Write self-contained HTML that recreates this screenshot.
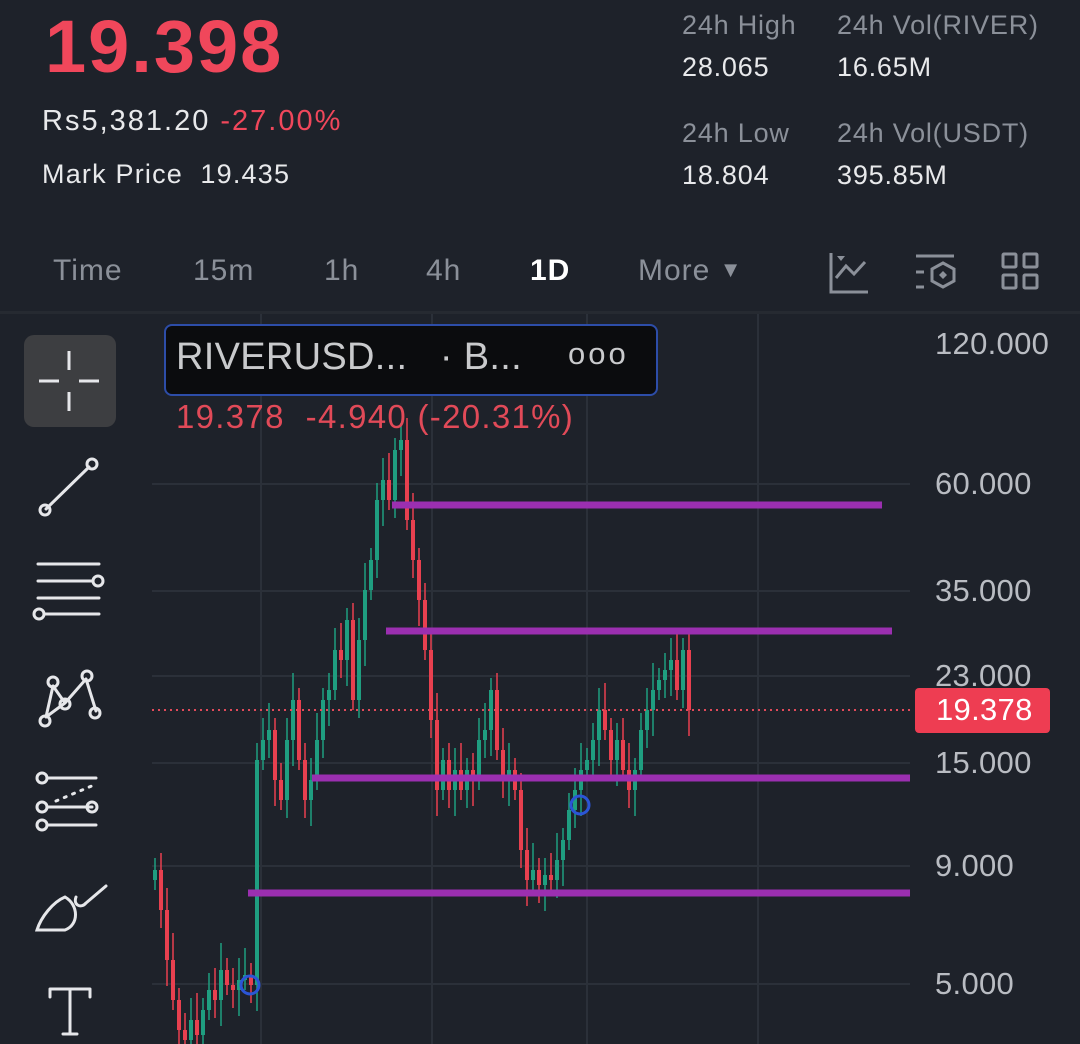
<!DOCTYPE html>
<html><head><meta charset="utf-8"><style>
body{margin:0;width:1080px;height:1044px;background:#1e222a;font-family:"Liberation Sans",sans-serif;overflow:hidden;position:relative;color:#e8e9eb}
.a{position:absolute;white-space:nowrap}
.g{color:#8b9099}
.tab{position:absolute;top:254px;font-size:30px;color:#8b9099;letter-spacing:1px}
.r{font-size:27px;letter-spacing:0.8px}
.y{font-size:31px;color:#b9bcc2;letter-spacing:0.3px}
</style></head><body>
<div class="a" style="left:45px;top:4px;font-size:74px;font-weight:bold;color:#f0475b;letter-spacing:2px">19.398</div>
<div class="a" style="left:42px;top:105px;font-size:29px;letter-spacing:2px">Rs5,381.20 <span style="color:#f0475b">-27.00%</span></div>
<div class="a" style="left:42px;top:159px;font-size:27px;letter-spacing:1.2px">Mark Price&nbsp; 19.435</div>
<div class="a g r" style="left:682px;top:10px">24h High</div>
<div class="a r" style="left:682px;top:52px">28.065</div>
<div class="a g r" style="left:837px;top:10px">24h Vol(RIVER)</div>
<div class="a r" style="left:837px;top:52px">16.65M</div>
<div class="a g r" style="left:682px;top:118px">24h Low</div>
<div class="a r" style="left:682px;top:160px">18.804</div>
<div class="a g r" style="left:837px;top:118px">24h Vol(USDT)</div>
<div class="a r" style="left:837px;top:160px">395.85M</div>

<div class="tab" style="left:53px">Time</div>
<div class="tab" style="left:193px">15m</div>
<div class="tab" style="left:324px">1h</div>
<div class="tab" style="left:426px">4h</div>
<div class="tab" style="left:530px;color:#fff;font-weight:bold">1D</div>
<div class="tab" style="left:638px">More <span style="font-size:22px;position:relative;top:-3px">▼</span></div>
<svg class="a" style="left:820px;top:245px" width="240" height="55" fill="none" stroke="#8b9099" stroke-width="3">
<path d="M11 8V47H48M16 33l10-12 8 8 11-12"/><path d="M17 11h8l-4 5z" fill="#8b9099" stroke="none"/>
<path d="M96 11h38M96 27h8M96 42h8"/><path d="M123 18l11 6v12l-11 6-11-6V24z"/><path d="M123 26l4 4-4 4-4-4z" fill="#8b9099" stroke="none"/>
<rect x="183" y="9" width="13" height="13" rx="1"/><rect x="204" y="9" width="13" height="13" rx="1"/><rect x="183" y="30" width="13" height="13" rx="1"/><rect x="204" y="30" width="13" height="13" rx="1"/>
</svg>
<div class="a" style="left:0;top:311px;width:1080px;height:3px;background:#262a31"></div>

<svg class="a" style="left:0;top:0" width="1080" height="1044" id="ch">
<g stroke="#2b3039" stroke-width="2">
<line x1="261" y1="314" x2="261" y2="1044"/><line x1="432" y1="314" x2="432" y2="1044"/><line x1="587" y1="314" x2="587" y2="1044"/><line x1="758" y1="314" x2="758" y2="1044"/>
<line x1="152" y1="484" x2="910" y2="484"/><line x1="152" y1="591" x2="910" y2="591"/><line x1="152" y1="676" x2="910" y2="676"/><line x1="152" y1="763" x2="910" y2="763"/><line x1="152" y1="866" x2="910" y2="866"/><line x1="152" y1="984" x2="910" y2="984"/>
</g>
<g id="cd"></g>
<line x1="152" y1="710" x2="912" y2="710" stroke="#e24a5a" stroke-width="2" stroke-dasharray="2 4"/>
<g stroke="#9b2fb0" stroke-width="7">
<line x1="392" y1="505" x2="882" y2="505"/><line x1="386" y1="631" x2="892" y2="631"/><line x1="312" y1="778" x2="910" y2="778"/><line x1="248" y1="893" x2="910" y2="893"/>
</g>
<circle cx="250" cy="985" r="9" fill="none" stroke="#2b55d6" stroke-width="3"/>
<circle cx="580" cy="805" r="9" fill="none" stroke="#2b55d6" stroke-width="3"/>
<g stroke="#e6e7ea" stroke-width="3" fill="none" stroke-linecap="round">
<path d="M46 509L89 467"/><circle cx="45" cy="510" r="5"/><circle cx="92" cy="464" r="5"/>
<path d="M38 564h61M38 581h55M38 598h61M45 614h54"/><circle cx="98" cy="581" r="5"/><circle cx="39" cy="614" r="5"/>
<path d="M53 686L46 717M53 686l12 17M86 679l-21 24M86 679l10 32M65 703l-19 14"/><circle cx="53" cy="682" r="5"/><circle cx="87" cy="676" r="5"/><circle cx="65" cy="704" r="5"/><circle cx="45" cy="721" r="5"/><circle cx="95" cy="713" r="5"/>
<path d="M48 778h48M48 807h44M48 825h48"/><path d="M56 801l38-16" stroke-dasharray="2 7"/><circle cx="42" cy="778" r="5"/><circle cx="42" cy="807" r="5"/><circle cx="92" cy="807" r="5"/><circle cx="42" cy="825" r="5"/>
<path d="M37 930h28c14-5 14-25 0-33c-12 5-24 20-28 33zM76 897c-3 8 5 12 10 6l20-17"/>
<path d="M50 989h40M90 989v8M50 989v8M70 989v45M63 1034h14"/>
</g>
<rect x="24" y="335" width="92" height="92" rx="10" fill="#3d3e41"/>
<path d="M69 351v19M69 392v19M39 381h20M79 381h20" stroke="#e6e7ea" stroke-width="3"/>
<rect x="915" y="688" width="135" height="45" rx="4" fill="#ee3d52"/>
</svg>
<div class="a" style="left:164px;top:324px;width:490px;height:68px;background:#0b0c0e;border:2px solid #2d4da8;border-radius:8px"></div>
<div class="a" style="left:176px;top:336px;font-size:38px;color:#c9cacc;letter-spacing:0.3px">RIVERUSD...&nbsp;&nbsp;&nbsp;· B...</div>
<div class="a" style="left:568px;top:336px;font-size:31px;color:#c9cacc;letter-spacing:3px">ooo</div>
<div class="a" style="left:176px;top:398px;font-size:33px;color:#e14a58;letter-spacing:1.3px">19.378&nbsp; -4.940 (-20.31%)</div>
<div class="a y" style="left:935px;top:326px">120.000</div>
<div class="a y" style="left:935px;top:466px">60.000</div>
<div class="a y" style="left:935px;top:573px">35.000</div>
<div class="a y" style="left:935px;top:658px">23.000</div>
<div class="a y" style="left:935px;top:745px">15.000</div>
<div class="a y" style="left:935px;top:848px">9.000</div>
<div class="a y" style="left:935px;top:966px">5.000</div>
<div class="a y" style="left:936px;top:692px;color:#fff">19.378</div>
<script>
var c=[870,910,960,1000,1030,1040,1020,1035,1010,990,1000,970,985,990,980,975,985,760,740,730,780,800,740,700,760,800,780,740,700,690,650,660,620,700,640,590,560,500,480,500,450,440,520,560,600,650,720,790,760,790,770,790,770,780,740,730,690,750,780,770,790,850,880,870,885,875,880,860,840,810,790,770,760,740,710,730,760,740,770,790,770,730,710,690,680,670,660,690,650,710];
var s='',p=880;
for(var i=0;i<c.length;i++){var x=153+6*i,o=p,cl=c[i],up=cl<o,col=up?'#1f9e80':'#e8404f';
var t=Math.min(o,cl),b=Math.max(o,cl);if(b-t<3)b=t+3;
s+='<line x1="'+(x+2)+'" y1="'+(t-12-(i%4)*5)+'" x2="'+(x+2)+'" y2="'+(b+10+(i%3)*8)+'" stroke="'+col+'" stroke-width="1.5"/>';
s+='<rect x="'+x+'" y="'+t+'" width="4" height="'+(b-t)+'" fill="'+col+'"/>';p=cl;}
document.getElementById('cd').innerHTML=s;
</script>
</body></html>
